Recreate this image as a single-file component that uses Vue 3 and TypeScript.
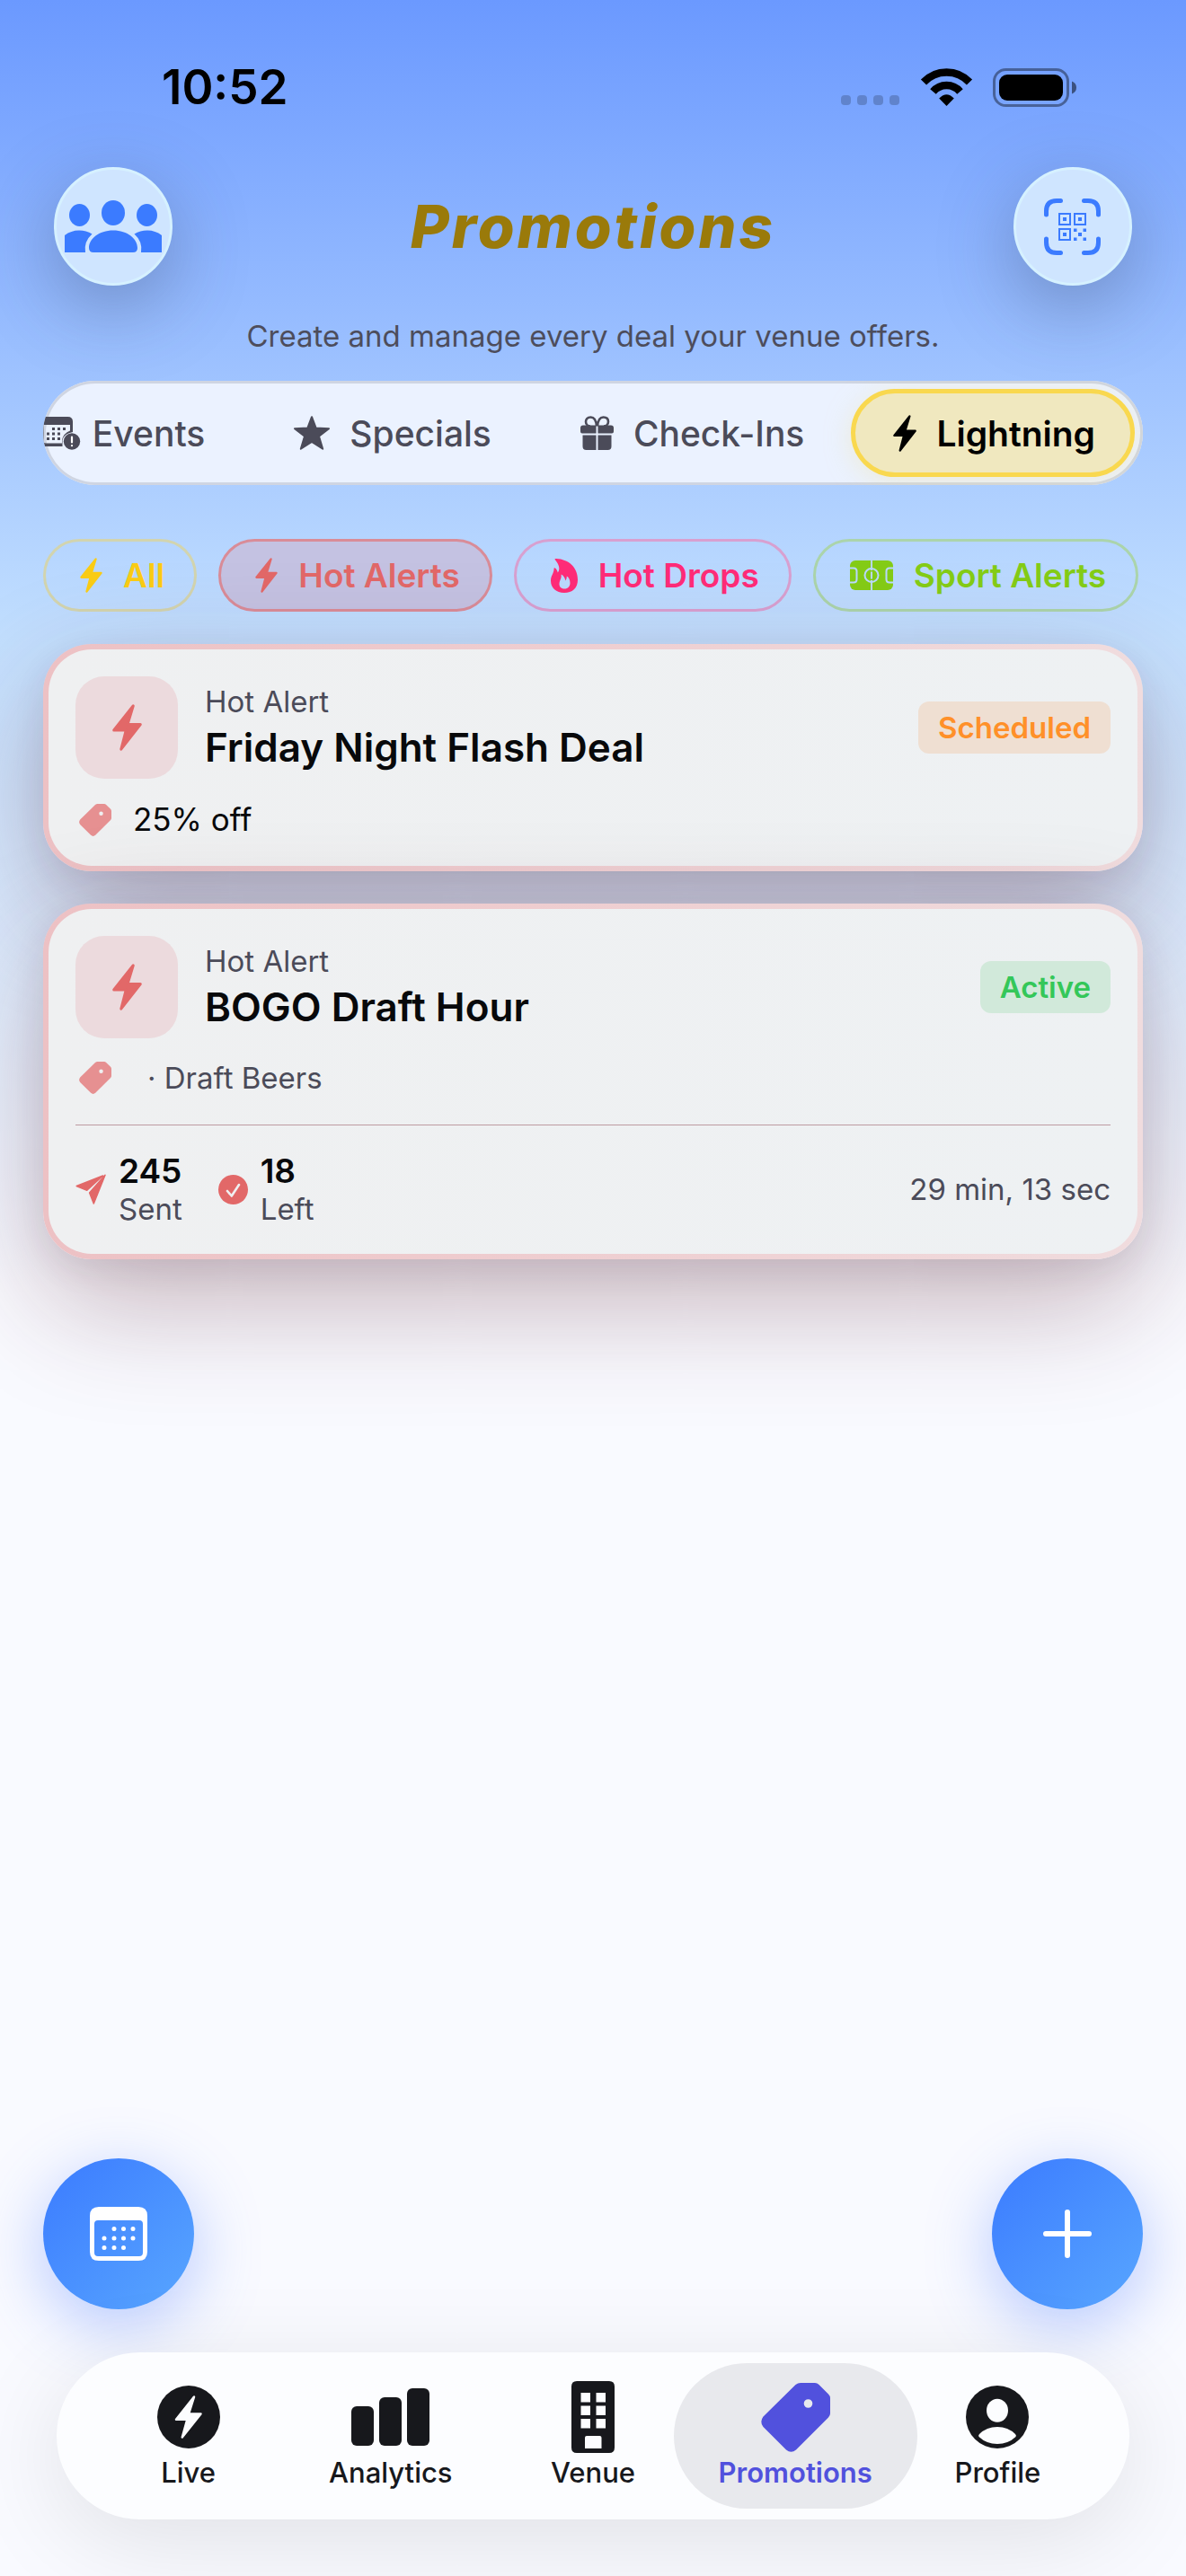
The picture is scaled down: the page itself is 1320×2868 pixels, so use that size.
<script setup lang="ts">
import { h, ref } from 'vue'
import type { FunctionalComponent } from 'vue'

interface IconShape {
  w: number
  h: number
  body: string
}

const tagBody =
  '<path fill="currentColor" fill-rule="evenodd" d="M44 0H60Q62.500 0 64.500 2L75 12.500Q77 14.500 77 17V34Q77 36.500 75 38.500L39 74.500Q33.500 79 28 74.500L2.500 49Q-2 43.500 2.500 37.500L38.500 2Q41 0 44 0ZM52.500 18.200A4.800 4.800 0 1 0 52.500 27.800A4.800 4.800 0 1 0 52.500 18.200Z"/>'

const icons: Record<string, IconShape> = {
  bolt: {
    w: 33,
    h: 52,
    body: '<path fill="currentColor" stroke="currentColor" stroke-width="3" stroke-linejoin="round" d="M23.300 1.800L17 22.500H31.300L9.800 50.200L15.300 29H1.700Z"/>'
  },
  tag: { w: 77, h: 77, body: tagBody },
  flame: {
    w: 30,
    h: 38,
    body: '<path fill="currentColor" fill-rule="evenodd" d="M4.500 .8C4.500 0 5.500 0 6.500 0C19 .6 30 9 30 23.500C30 33 24 38 15 38C6 38 0 32.500 0 24.500C0 19 3.500 16.500 3.500 11.500C3.500 10 4.500 10 5.500 11C6.500 12 7.300 13.500 7.800 15.500C11.500 11 8 5 4.500 .8ZM11.500 17.500C12.500 22 9.500 24 9.500 28.500C9.500 31.500 12 33.500 15.500 33.500C19 33.500 21.500 31 21.500 27C21.500 23.500 19.800 20.500 17.800 19.500C17.800 21.500 17.500 23 16.300 24.500C16 21.500 14 18.500 11.500 17.500Z"/>'
  },
  star: {
    w: 40,
    h: 38,
    body: '<path fill="currentColor" stroke="currentColor" stroke-width="2" stroke-linejoin="round" d="M20 1.200L24.700 13.600L39 14.200L28 22.700L32.200 36.700L20 29L7.800 36.700L12 22.700L1 14.200L15.300 13.600Z"/>'
  },
  gift: {
    w: 37,
    h: 38,
    body: '<g fill="currentColor"><path d="M3 10.500H17.500V19.500H2Q0 19.500 0 17.500V13.500Q0 10.500 3 10.500ZM19.500 10.500H34Q37 10.500 37 13.500V17.500Q37 19.500 35 19.500H19.500ZM2.500 21.500H17.500V38H6.500Q2.500 38 2.500 34ZM19.500 21.500H34.500V34Q34.500 38 30.500 38H19.500Z"/></g><path fill="none" stroke="currentColor" stroke-width="2.600" d="M18 11.500C17.500 5 15.500 1.500 11.500 1.500C7.500 1.500 6 4 6 6.500C6 9 8 11.500 11 11.500M19 11.500C19.500 5 21.500 1.500 25.500 1.500C29.500 1.500 31 4 31 6.500C31 9 29 11.500 26 11.500"/>'
  },
  event: {
    w: 36,
    h: 37,
    body: '<path fill="currentColor" fill-rule="evenodd" d="M6 0H30.500Q36 0 36 5.500V17Q26.500 18.500 24.500 26V33H6Q0 33 0 27V5.500Q0 0 6 0ZM3.500 9V27Q3.500 29.500 6 29.500H24V26Q25.500 18.500 33 15.500V9Z"/><g fill="currentColor"><path d="M13 12h3v3h-3zM19 12h3v3h-3zM25 12h3v3h-3zM7 17.500h3v3h-3zM13 17.500h3v3h-3zM19 17.500h3v3h-3zM7 23h3v3h-3zM13 23h3v3h-3zM19 23h3v3h-3z"/><circle cx="35" cy="27.500" r="9.200"/></g><path stroke="#fff" stroke-width="2.200" stroke-linecap="round" d="M35 22.500V28.500M35 32V32.200"/>'
  },
  pitch: {
    w: 48,
    h: 33,
    body: '<mask id="pitch-lines"><path fill="#fff" d="M0 0H48V33H0Z"/><g fill="none" stroke="#000" stroke-width="2"><path d="M24 0V11M24 22V33M0 8.500H4Q7.500 8.500 7.500 12V21Q7.500 24.500 4 24.500H0M48 8.500H44Q40.500 8.500 40.500 12V21Q40.500 24.500 44 24.500H48"/><circle cx="24" cy="16.500" r="7.500"/><path d="M24 12.500V20.500"/></g></mask><rect width="48" height="33" rx="6" fill="currentColor" mask="url(#pitch-lines)"/>'
  },
  people: {
    w: 108,
    h: 58,
    body: '<g fill="currentColor"><ellipse cx="54" cy="14" rx="13" ry="14"/><ellipse cx="16.500" cy="16.500" rx="11.500" ry="12.500"/><ellipse cx="91.500" cy="16.500" rx="11.500" ry="12.500"/><path d="M54 33.500C70 33.500 81 43 81 53Q81 58 76 58H32Q27 58 27 53C27 43 38 33.500 54 33.500ZM0 39Q7 33.500 16 33.500Q24 33.500 30.500 37.500Q21 46 23 58H0ZM108 39Q101 33.500 92 33.500Q84 33.500 77.500 37.500Q87 46 85 58H108Z"/></g>'
  },
  qr: {
    w: 63,
    h: 63,
    body: '<g fill="none" stroke="currentColor"><path stroke-width="5" stroke-linecap="round" d="M2.500 18V14Q2.500 2.500 14 2.500H18.500M44.500 2.500H49Q60.500 2.500 60.500 14V18M60.500 45V49Q60.500 60.500 49 60.500H44.500M18.500 60.500H14Q2.500 60.500 2.500 49V45"/><path stroke-width="2" d="M17 17H29V29H17ZM34 17H46V29H34ZM17 34H29V46H17Z"/></g><path fill="currentColor" d="M21 21h4v4h-4zM38 21h4v4h-4zM21 38h4v4h-4zM33 33.500h3.500v3.500h-3.500zM43.500 33.500h3.500v3.500h-3.500zM38 38h4v4h-4zM33 43.500h3.500v3.500h-3.500zM43.500 43.500h3.500v3.500h-3.500z"/>'
  },
  plane: {
    w: 34,
    h: 34,
    body: '<path fill="currentColor" stroke="currentColor" stroke-width="1.500" stroke-linejoin="round" d="M30.500 2L1.200 13.500L12.800 18.200ZM33 1.200L15.600 21L20.300 33Z"/>'
  },
  check: {
    w: 33,
    h: 33,
    body: '<circle cx="16.500" cy="16.500" r="16.500" fill="currentColor"/><path fill="none" stroke="#f0f0f1" stroke-width="2.600" stroke-linecap="round" stroke-linejoin="round" d="M10 18L14.800 23.500L23 11"/>'
  },
  calendar: {
    w: 64,
    h: 60,
    body: '<path fill="currentColor" fill-rule="evenodd" d="M10 0H54Q64 0 64 10V50Q64 60 54 60H10Q0 60 0 50V10Q0 0 10 0ZM9 15Q5 15 5 19V51Q5 55 9 55H55Q59 55 59 51V19Q59 15 55 15Z"/><path fill="none" stroke="currentColor" stroke-width="5" stroke-linecap="round" d="M27 24.500v.1M37.500 24.500v.1M48 24.500v.1M16 35v.1M27 35v.1M37.500 35v.1M48 35v.1M16 45.500v.1M27 45.500v.1M37.500 45.500v.1"/>'
  },
  plus: {
    w: 54,
    h: 54,
    body: '<path stroke="currentColor" stroke-width="6" stroke-linecap="round" d="M27 3V51M3 27H51"/>'
  },
  live: {
    w: 70,
    h: 70,
    body: '<circle cx="35" cy="35" r="35" fill="currentColor"/><path fill="#fcfdff" stroke="#fcfdff" stroke-width="2.500" stroke-linejoin="round" d="M41 12.500L35 31.500H48.500L27.800 57.500L33.300 37.800H21Z"/>'
  },
  bars: {
    w: 87,
    h: 64,
    body: '<g fill="currentColor"><rect y="20" width="25" height="44" rx="6"/><rect x="31" y="10" width="25" height="54" rx="6"/><rect x="62" width="25" height="64" rx="6"/></g>'
  },
  building: {
    w: 48,
    h: 80,
    body: '<path fill="currentColor" fill-rule="evenodd" d="M6 0H42Q48 0 48 6V74Q48 80 42 80H6Q0 80 0 74V6Q0 0 6 0ZM10.500 13V23.500H21V13ZM27.500 13V23.500H38V13ZM10.500 27.500V38H21V27.500ZM27.500 27.500V38H38V27.500ZM10.500 42V52.500H21V42ZM27.500 42V52.500H38V42ZM17 61Q15 61 15 63V75H33.500V63Q33.500 61 31.500 61Z"/>'
  },
  profile: {
    w: 70,
    h: 70,
    body: '<circle cx="35" cy="35" r="35" fill="currentColor"/><ellipse cx="35" cy="27.700" rx="12" ry="13" fill="#fcfdff"/><path fill="#fcfdff" d="M14.500 57Q13.500 55.500 15 54Q23 46 35 46T55 54Q56.500 55.500 55.500 57Q47 65 35 65T14.500 57Z"/>'
  },
  wifi: {
    w: 57,
    h: 42,
    body: '<g fill="none" stroke="currentColor" stroke-width="8.500"><path d="M3 15.500A35 35 0 0 1 54 15.500"/><path d="M13.500 26A19.500 19.500 0 0 1 43.500 26"/></g><path fill="currentColor" d="M20.200 33.500Q28.500 25 36.800 33.500L28.500 42Z"/>'
  },
  battery: {
    w: 93,
    h: 43,
    body: '<rect x="1.500" y="1.500" width="82" height="40" rx="13" fill="none" stroke="#000" stroke-opacity=".4" stroke-width="3"/><rect x="7" y="7" width="71" height="29" rx="9"/><path fill-opacity=".5" d="M88 14.500Q93 16.500 93 21.500T88 28.500Z"/>'
  },
  signal: {
    w: 66,
    h: 11,
    body: '<g fill-opacity=".2"><rect width="11" height="11" rx="4"/><rect x="18" width="11" height="11" rx="4"/><rect x="36" width="11" height="11" rx="4"/><rect x="54" width="11" height="11" rx="4"/></g>'
  }
}

const Icon: FunctionalComponent<{ name: string; width?: number }> = (props) => {
  const icon = icons[props.name]
  const width = props.width ?? icon.w
  return h('svg', {
    viewBox: `0 0 ${icon.w} ${icon.h}`,
    width,
    height: Math.round((width * icon.h) / icon.w),
    'aria-hidden': 'true',
    innerHTML: icon.body
  })
}
Icon.props = ['name', 'width']

const tabs = [
  { label: 'Events', icon: 'event', width: 36 },
  { label: 'Specials', icon: 'star', width: 40 },
  { label: 'Check-Ins', icon: 'gift', width: 37 },
  { label: 'Lightning', icon: 'bolt', width: 26 }
]
const activeTab = ref('Lightning')

const filters = [
  { label: 'All', icon: 'bolt', width: 25, tone: 'yellow' },
  { label: 'Hot Alerts', icon: 'bolt', width: 25, tone: 'red' },
  { label: 'Hot Drops', icon: 'flame', width: 30, tone: 'pink' },
  { label: 'Sport Alerts', icon: 'pitch', width: 48, tone: 'green' }
]
const activeFilter = ref('Hot Alerts')

interface Deal {
  title: string
  status: 'Scheduled' | 'Active'
  offer: string
  items: string
  stats?: { sent: number; left: number; remaining: string }
}

const deals: Deal[] = [
  { title: 'Friday Night Flash Deal', status: 'Scheduled', offer: '25% off', items: '' },
  {
    title: 'BOGO Draft Hour',
    status: 'Active',
    offer: '',
    items: '· Draft Beers',
    stats: { sent: 245, left: 18, remaining: '29 min, 13 sec' }
  }
]

const navItems = [
  { label: 'Live', icon: 'live' },
  { label: 'Analytics', icon: 'bars' },
  { label: 'Venue', icon: 'building' },
  { label: 'Promotions', icon: 'tag' },
  { label: 'Profile', icon: 'profile' }
]
const activeNav = ref('Promotions')
</script>

<template>
  <div class="screen">
    <div class="status">
      <span class="time">10:52</span>
      <div class="status-icons">
        <Icon name="signal" class="signal" />
        <Icon name="wifi" />
        <Icon name="battery" />
      </div>
    </div>

    <header class="header">
      <button class="round" type="button" aria-label="Customers"><Icon name="people" /></button>
      <h1>Promotions</h1>
      <button class="round" type="button" aria-label="Scan code"><Icon name="qr" /></button>
    </header>
    <p class="subtitle">Create and manage every deal your venue offers.</p>

    <nav class="tabs" aria-label="Promotion types">
      <button
        v-for="tab in tabs"
        :key="tab.label"
        type="button"
        class="tab"
        :class="{ active: tab.label === activeTab }"
        @click="activeTab = tab.label"
      >
        <Icon :name="tab.icon" :width="tab.width" />
        <span>{{ tab.label }}</span>
      </button>
    </nav>

    <div class="filters">
      <button
        v-for="filter in filters"
        :key="filter.label"
        type="button"
        class="chip"
        :class="[filter.tone, { active: filter.label === activeFilter }]"
        @click="activeFilter = filter.label"
      >
        <Icon :name="filter.icon" :width="filter.width" />
        <span>{{ filter.label }}</span>
      </button>
    </div>

    <main class="deals">
      <article v-for="deal in deals" :key="deal.title" class="card">
        <div class="card-head">
          <div class="tile"><Icon name="bolt" /></div>
          <div class="names">
            <span class="kind">Hot Alert</span>
            <h2>{{ deal.title }}</h2>
          </div>
          <span class="badge" :class="deal.status.toLowerCase()">{{ deal.status }}</span>
        </div>
        <div class="offer">
          <Icon name="tag" :width="36" />
          <span v-if="deal.offer" class="amount">{{ deal.offer }}</span>
          <span v-if="deal.items" class="items">{{ deal.items }}</span>
        </div>
        <footer v-if="deal.stats" class="stats">
          <div class="stat">
            <Icon name="plane" />
            <div><strong>{{ deal.stats.sent }}</strong><span>Sent</span></div>
          </div>
          <div class="stat">
            <Icon name="check" />
            <div><strong>{{ deal.stats.left }}</strong><span>Left</span></div>
          </div>
          <time>{{ deal.stats.remaining }}</time>
        </footer>
      </article>
    </main>

    <div class="fabs">
      <button class="fab" type="button" aria-label="Calendar"><Icon name="calendar" /></button>
      <button class="fab" type="button" aria-label="New promotion"><Icon name="plus" /></button>
    </div>

    <nav class="bar" aria-label="Main">
      <a
        v-for="item in navItems"
        :key="item.label"
        href="#"
        class="bar-item"
        :class="{ active: item.label === activeNav }"
        @click.prevent="activeNav = item.label"
      >
        <span class="bar-icon"><Icon :name="item.icon" /></span>
        <span class="bar-label">{{ item.label }}</span>
      </a>
    </nav>
  </div>
</template>

<style>
body {
  margin: 0;
  background: #f8faff;
}
</style>

<style scoped>
.screen {
  box-sizing: border-box;
  min-height: 100vh;
  display: flex;
  flex-direction: column;
  overflow: hidden;
  padding: 0 48px 63px;
  font-family: Inter, 'Liberation Sans', sans-serif;
  color: #08090b;
  background: linear-gradient(180deg, #6b99ff 0%, #c3e0ff 25%, #f9faff 50%, #f9faff 100%);
}

.screen svg {
  display: block;
  flex: none;
  overflow: visible;
}

button {
  font: inherit;
  margin: 0;
  cursor: pointer;
}

.status {
  display: flex;
  justify-content: space-between;
  align-items: center;
  height: 66px;
  padding: 64px 74px 56px 132px;
  color: #000;
}

.time {
  font-size: 53px;
  font-weight: 600;
  line-height: 64px;
}

.status-icons {
  display: flex;
  align-items: center;
  gap: 23px;
}

.signal {
  align-self: flex-end;
  margin-bottom: 2px;
}

.header {
  display: flex;
  justify-content: space-between;
  align-items: center;
  padding: 0 12px;
}

.round {
  box-sizing: border-box;
  width: 132px;
  height: 132px;
  padding: 0;
  display: flex;
  align-items: center;
  justify-content: center;
  border: 3px solid #d6f1ff;
  border-radius: 50%;
  background: #cfe5ff;
  color: #3b7bff;
  box-shadow: 0 24px 84px rgba(50, 60, 90, 0.36);
}

h1 {
  margin: 0;
  font-size: 66px;
  font-weight: 800;
  font-style: italic;
  line-height: 80px;
  letter-spacing: 3px;
  color: #9a7a0a;
}

.subtitle {
  margin: 36px 0 30px;
  text-align: center;
  font-size: 33px;
  line-height: 40px;
  color: #4d4d5c;
}

.tabs {
  box-sizing: border-box;
  display: flex;
  justify-content: flex-end;
  gap: 8px;
  padding: 9px;
  overflow: hidden;
  border-radius: 58px;
  background: #ebf2ff;
  box-shadow: inset 0 0 0 3px #cfd5e2;
}

.tab {
  box-sizing: border-box;
  flex: none;
  height: 98px;
  display: flex;
  align-items: center;
  gap: 22px;
  padding: 0 39px 0 42px;
  border: 5px solid transparent;
  border-radius: 49px;
  background: none;
  font-size: 39px;
  font-weight: 500;
  color: #4b4b59;
}

.tab.active {
  border-color: #f9d84f;
  background: #f0e8bf;
  color: #000;
  font-weight: 600;
  box-shadow: 0 6px 30px rgba(240, 225, 150, 0.36);
}

.filters {
  display: flex;
  gap: 24px;
  margin: 60px 0 36px;
}

.chip {
  box-sizing: border-box;
  flex: none;
  height: 81px;
  display: flex;
  align-items: center;
  gap: 23px;
  padding: 0 33px 0 38px;
  border: 3px solid;
  border-radius: 41px;
  background: none;
  font-size: 37px;
  font-weight: 600;
}

.chip.yellow {
  color: #facc15;
  border-color: #d2d4af;
}

.chip.red {
  color: #e26868;
  border-color: #b9bedf;
}

.chip.red.active {
  border-color: #d98c98;
  background: #c4c2e2;
}

.chip.pink {
  color: #ff2c78;
  border-color: #d8a0d0;
}

.chip.green {
  color: #84cc16;
  border-color: #abd4ab;
}

.deals {
  flex: 1;
  display: flex;
  flex-direction: column;
  gap: 36px;
}

.card {
  padding: 30px;
  border: 6px solid transparent;
  border-radius: 54px;
  background:
    linear-gradient(90deg, #eff0f1, #eef1f3) padding-box,
    linear-gradient(90deg, #edc1c4, #f0dcde) border-box;
  box-shadow:
    0 12px 36px rgba(60, 40, 60, 0.08),
    0 48px 132px rgba(90, 30, 45, 0.32);
}

.card-head {
  display: flex;
  align-items: center;
  gap: 30px;
}

.tile {
  width: 114px;
  height: 114px;
  display: flex;
  align-items: center;
  justify-content: center;
  border-radius: 32px;
  background: #ecdadd;
  color: #e26868;
}

.names {
  flex: 1;
  display: flex;
  flex-direction: column;
  gap: 4px;
}

.kind {
  font-size: 33px;
  line-height: 40px;
  color: #4b4b59;
}

h2 {
  margin: 0;
  font-size: 44px;
  font-weight: 600;
  line-height: 54px;
}

.badge {
  padding: 9px 22px;
  border-radius: 12px;
  font-size: 33px;
  font-weight: 600;
  line-height: 40px;
}

.badge.scheduled {
  color: #ff9029;
  background: #efdfd2;
}

.badge.active {
  color: #34c759;
  background: #d1e9da;
}

.offer {
  display: flex;
  align-items: center;
  gap: 24px;
  margin-top: 24px;
  padding-left: 4px;
}

.offer svg {
  color: #e69091;
}

.amount {
  font-size: 35px;
  line-height: 43px;
}

.items {
  padding-left: 16px;
  font-size: 33px;
  line-height: 40px;
  color: #4b4b59;
}

.stats {
  display: flex;
  align-items: center;
  gap: 40px;
  margin-top: 32px;
  padding-top: 29px;
  border-top: 1px solid #bd9ba1;
}

.stat {
  display: flex;
  align-items: center;
  gap: 14px;
  color: #e26868;
}

.stat div {
  display: flex;
  flex-direction: column;
}

.stat strong {
  font-size: 37px;
  font-weight: 600;
  line-height: 44px;
  color: #08090b;
}

.stat span,
.stats time {
  font-size: 33px;
  line-height: 40px;
  color: #4b4b59;
}

.stats time {
  margin-left: auto;
}

.fabs {
  display: flex;
  justify-content: space-between;
  margin-bottom: 48px;
}

.fab {
  width: 168px;
  height: 168px;
  padding: 0;
  display: flex;
  align-items: center;
  justify-content: center;
  border: 0;
  border-radius: 50%;
  color: #fff;
  background: linear-gradient(135deg, #3b7bff, #58a6ff);
  box-shadow: 0 18px 72px rgba(59, 110, 255, 0.36);
}

.bar {
  display: flex;
  margin: 0 15px;
  padding: 12px 34px;
  border-radius: 93px;
  background: #fcfdff;
  box-shadow: 0 24px 108px rgba(0, 0, 0, 0.1);
}

.bar-item {
  position: relative;
  box-sizing: border-box;
  flex: 1 1 0;
  height: 162px;
  display: flex;
  flex-direction: column;
  align-items: center;
  gap: 4px;
  padding-top: 20px;
  color: #17181c;
  text-decoration: none;
}

.bar-item.active {
  color: #5151dd;
}

.bar-item.active::before {
  content: '';
  position: absolute;
  inset: 0 -23px;
  border-radius: 81px;
  background: #e8e9ed;
}

.bar-icon,
.bar-label {
  position: relative;
}

.bar-icon {
  height: 80px;
  display: flex;
  align-items: center;
}

.bar-label {
  font-size: 31px;
  font-weight: 500;
  line-height: 36px;
}

.bar-item.active .bar-label {
  font-weight: 600;
}
</style>
